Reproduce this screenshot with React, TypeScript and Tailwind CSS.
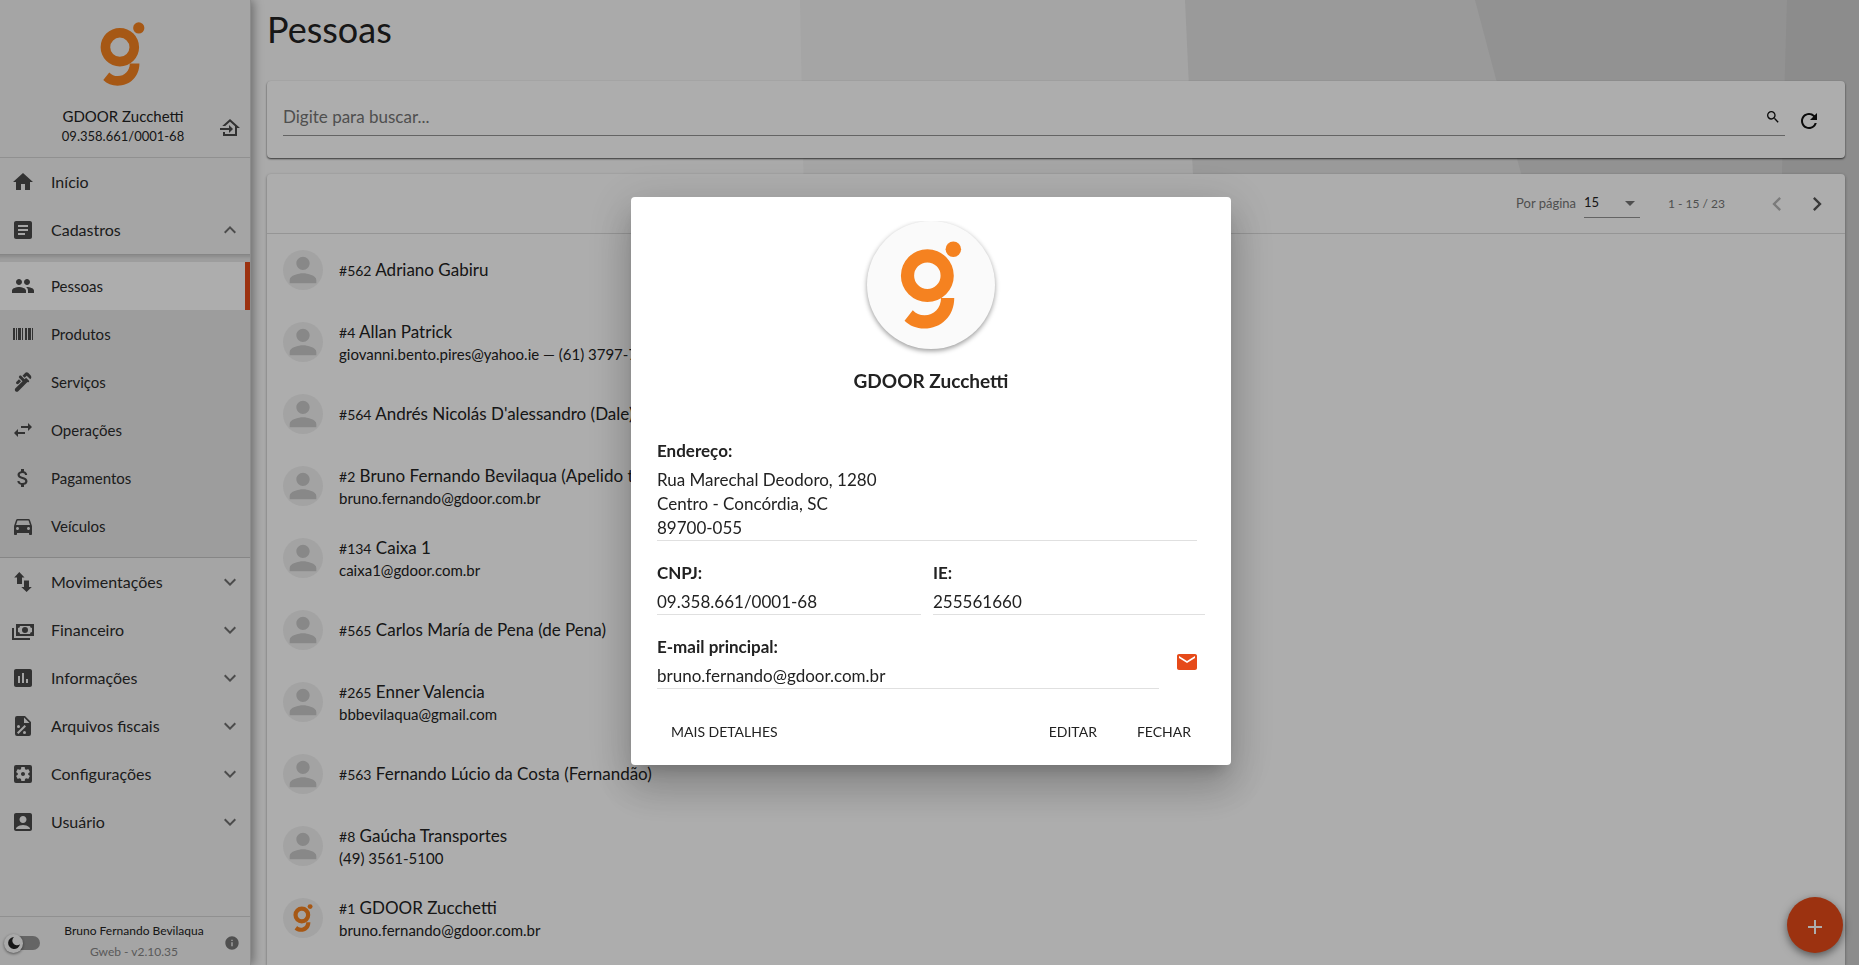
import type { ReactNode } from 'react';
import {
  MdAccountBox,
  MdArrowDropDown,
  MdArticle,
  MdAssessment,
  MdAttachMoney,
  MdChevronLeft,
  MdChevronRight,
  MdDirectionsCar,
  MdEmail,
  MdExpandLess,
  MdExpandMore,
  MdHome,
  MdInfo,
  MdPeople,
  MdPerson,
  MdPlumbing,
  MdRefresh,
  MdSearch,
  MdSettingsApplications,
  MdSwapHoriz,
} from 'react-icons/md';

function PathIcon({ d, className = 'w-6 h-6' }: { d: string; className?: string }) {
  return (
    <svg viewBox="0 0 24 24" className={className} fill="currentColor" fillRule="evenodd" aria-hidden="true">
      <path d={d} />
    </svg>
  );
}

const BARCODE =
  'M2,6H4V18H2V6M5,6H6V18H5V6M7,6H10V18H7V6M11,6H12V18H11V6M14,6H16V18H14V6M17,6H20V18H17V6M21,6H22V18H21V6Z';
const SWAP_VERTICAL = 'M8.3 2L13.5 7.5H11V14H6V7.5H3.2ZM13 10.5H18V17H20.8L15.6 22L10.3 17H13Z';
const CASH =
  'M5,6H23V18H5V6M14,9A3,3 0 0,1 17,12A3,3 0 0,1 14,15A3,3 0 0,1 11,12A3,3 0 0,1 14,9M9,8A2,2 0 0,1 7,10V14A2,2 0 0,1 9,16H19A2,2 0 0,1 21,14V10A2,2 0 0,1 19,8H9M1,10H3V20H19V22H1V10Z';
const FILE_PERCENT =
  'M6 2H14L20 8V20A2 2 0 0 1 18 22H6A2 2 0 0 1 4 20V4A2 2 0 0 1 6 2M13 3.5V9H18.5ZM7.5 11A1.5 1.5 0 1 0 7.5 14A1.5 1.5 0 1 0 7.5 11M13.5 17A1.5 1.5 0 1 0 13.5 20A1.5 1.5 0 1 0 13.5 17M13.6 11L6 18.6L7.4 20L15 12.4Z';
const HOME_IMPORT =
  'M15 13L11 9V12H2V14H11V17M5 20V16H7V18H17V10.19L12 5.69L7.21 10H4.22L12 3L22 12H19V20H5Z';

function Logo({ className }: { className: string }) {
  return (
    <svg viewBox="302 66 134 193" className={className} fill="#f58220" aria-label="GDOOR">
      <path
        fillRule="evenodd"
        d="M361 84A58 58 0 1 1 361 200A58 58 0 1 1 361 84ZM361 113A29 29 0 1 0 361 171A29 29 0 1 0 361 113Z"
      />
      <circle cx="418" cy="84" r="17" />
      <path d="M391 191H420C420 231 391 258 354 258C337 258 322 252 311 241L329 218C336 225 344 229 355 229C375 229 391 213 391 191Z" />
    </svg>
  );
}

interface NavEntry {
  label: string;
  icon: ReactNode;
}

const registerItems: NavEntry[] = [
  { label: 'Pessoas', icon: <MdPeople className="w-6 h-6" /> },
  { label: 'Produtos', icon: <PathIcon d={BARCODE} /> },
  { label: 'Serviços', icon: <MdPlumbing className="w-6 h-6" /> },
  { label: 'Operações', icon: <MdSwapHoriz className="w-6 h-6" /> },
  { label: 'Pagamentos', icon: <MdAttachMoney className="w-6 h-6" /> },
  { label: 'Veículos', icon: <MdDirectionsCar className="w-6 h-6" /> },
];

const groups: NavEntry[] = [
  { label: 'Movimentações', icon: <PathIcon d={SWAP_VERTICAL} /> },
  { label: 'Financeiro', icon: <PathIcon d={CASH} /> },
  { label: 'Informações', icon: <MdAssessment className="w-6 h-6" /> },
  { label: 'Arquivos fiscais', icon: <PathIcon d={FILE_PERCENT} /> },
  { label: 'Configurações', icon: <MdSettingsApplications className="w-6 h-6" /> },
  { label: 'Usuário', icon: <MdAccountBox className="w-6 h-6" /> },
];

const people = [
  { id: 562, name: 'Adriano Gabiru' },
  { id: 4, name: 'Allan Patrick', detail: 'giovanni.bento.pires@yahoo.ie — (61) 3797-7150' },
  { id: 564, name: "Andrés Nicolás D'alessandro (Dale)" },
  { id: 2, name: 'Bruno Fernando Bevilaqua (Apelido teste)', detail: 'bruno.fernando@gdoor.com.br' },
  { id: 134, name: 'Caixa 1', detail: 'caixa1@gdoor.com.br' },
  { id: 565, name: 'Carlos María de Pena (de Pena)' },
  { id: 265, name: 'Enner Valencia', detail: 'bbbevilaqua@gmail.com' },
  { id: 563, name: 'Fernando Lúcio da Costa (Fernandão)' },
  { id: 8, name: 'Gaúcha Transportes', detail: '(49) 3561-5100' },
  { id: 1, name: 'GDOOR Zucchetti', detail: 'bruno.fernando@gdoor.com.br', logo: true },
];

function Sidebar() {
  return (
    <aside className="relative z-10 flex w-[251px] shrink-0 flex-col border-r border-[#d0d0d0] bg-[#f4f4f4] text-[#4b4b4b] shadow-[2px_0_10px_rgba(0,0,0,0.4)]">
      <header className="flex h-[158px] shrink-0 flex-col items-center border-b border-[#d4d4d4] pt-[22px]">
        <Logo className="mr-1.5 h-16 w-[45px]" />
        <div className="mt-5 grid w-full grid-cols-[40px_1fr_40px] items-center">
          <div className="col-start-2 pr-1 text-center text-[#222]">
            <p className="text-[15px] leading-5">GDOOR Zucchetti</p>
            <p className="text-[13px] leading-5">09.358.661/0001-68</p>
          </div>
          <button aria-label="Trocar empresa" className="justify-self-center pt-1">
            <PathIcon d={HOME_IMPORT} />
          </button>
        </div>
      </header>

      <nav className="flex-1 text-[16px]">
        <a href="#inicio" className="flex h-12 items-center gap-4 pl-[11px]">
          <MdHome className="w-6 h-6" />
          <span className="text-[#2b2b2b]">Início</span>
        </a>
        <button className="flex h-12 w-full items-center gap-4 pr-2 pl-[11px]">
          <MdArticle className="w-6 h-6" />
          <span className="text-[#2b2b2b]">Cadastros</span>
          <MdExpandLess className="ml-auto w-6 h-6 text-[#707070]" />
        </button>
        <ul className="border-y border-[#c6c6c6] bg-[#e8e8e8] py-[7px] text-[15px] shadow-[inset_0_4px_3px_-2px_rgba(0,0,0,0.12)]">
          {registerItems.map((item, i) => (
            <li key={item.label}>
              <a
                href={`#${item.label}`}
                className={
                  i === 0
                    ? 'flex h-12 items-center gap-4 border-r-[5px] border-[#e64a19] bg-white pl-[11px]'
                    : 'flex h-12 items-center gap-4 pl-[11px]'
                }
              >
                {item.icon}
                <span className="text-[#2b2b2b]">{item.label}</span>
              </a>
            </li>
          ))}
        </ul>
        {groups.map((group) => (
          <button key={group.label} className="flex h-12 w-full items-center gap-4 pr-2 pl-[11px]">
            {group.icon}
            <span className="text-[#2b2b2b]">{group.label}</span>
            <MdExpandMore className="ml-auto w-6 h-6 text-[#707070]" />
          </button>
        ))}
      </nav>

      <footer className="flex h-[49px] shrink-0 items-center justify-between border-t border-[#d4d4d4] pt-1 pr-[10px] pl-1">
        <label className="relative flex h-5 w-9 items-center">
          <input type="checkbox" aria-label="Tema escuro" className="peer sr-only" />
          <span className="ml-2 h-[14px] w-7 rounded-full bg-[#969696]" />
          <span className="absolute left-0 flex h-[19px] w-[19px] items-center justify-center rounded-full bg-[#fafafa] shadow-[0_1px_3px_rgba(0,0,0,0.5)]">
            <svg viewBox="0 0 14 14" className="h-[14px] w-[14px]" fill="#222" aria-hidden="true">
              <path d="M7 1A6 6 0 1 0 13 8.2A4.4 4.4 0 0 1 7 1Z" />
            </svg>
          </span>
        </label>
        <div className="pb-1 pl-1 text-center">
          <p className="text-[12px] leading-[21px] text-[#222]">Bruno Fernando Bevilaqua</p>
          <p className="text-[12px] leading-[21px] text-[#858585]">Gweb - v2.10.35</p>
        </div>
        <button aria-label="Informações do sistema" className="text-[#777]">
          <MdInfo className="h-4 w-4" />
        </button>
      </footer>
    </aside>
  );
}

function Backdrop() {
  return (
    <svg
      viewBox="0 0 1608 965"
      preserveAspectRatio="none"
      className="absolute inset-0 h-full w-full"
      aria-hidden="true"
    >
      <rect width="1608" height="965" fill="#fbfbfb" />
      <path d="M549 0H1608V965H568Z" fill="#f3f3f3" />
      <path d="M934 0H1608V965H978Z" fill="#e3e3e3" />
      <path d="M1224 0H1608V965H1480Z" fill="#d7d7d7" />
      <path d="M1536 0H1608V965H1508Z" fill="#cecece" />
    </svg>
  );
}

function SearchCard() {
  return (
    <section className="mt-7 flex h-[77px] shrink-0 items-center gap-2 rounded bg-white pr-5 pl-4 shadow-[0_1px_2px_rgba(0,0,0,0.7)]">
      <label className="mb-1 flex h-9 flex-1 items-center border-b border-[#949494] pr-1">
        <input
          type="text"
          aria-label="Buscar"
          placeholder="Digite para buscar..."
          className="flex-1 bg-transparent text-[17px] text-black outline-none placeholder:text-[#757575]"
        />
        <MdSearch className="h-4 w-4 text-[#111]" />
      </label>
      <button aria-label="Atualizar" className="flex h-8 w-8 items-center justify-center pt-0.5">
        <MdRefresh className="h-6 w-6 text-[#111]" />
      </button>
    </section>
  );
}

function PeopleList() {
  return (
    <section className="mt-4 flex-1 rounded-t bg-white shadow-[0_1px_3px_rgba(0,0,0,0.4)]">
      <div className="flex h-[60px] items-center justify-end border-b border-[#dcdcdc] pr-2 text-[13px] text-[#757575]">
        <label htmlFor="page-size">Por página</label>
        <div className="relative ml-2 flex h-7 w-14 items-center border-b border-[#949494]">
          <select id="page-size" defaultValue="15" className="w-full appearance-none bg-transparent text-[#222] outline-none">
            <option>15</option>
            <option>30</option>
          </select>
          <MdArrowDropDown className="pointer-events-none absolute -right-0.5 h-6 w-6" />
        </div>
        <span className="mr-8 ml-7 text-[12px]">1 - 15 / 23</span>
        <button aria-label="Página anterior" className="flex h-10 w-10 items-center justify-center text-[#b5b5b5]">
          <MdChevronLeft className="h-7 w-7" />
        </button>
        <button aria-label="Próxima página" className="flex h-10 w-10 items-center justify-center text-[#555]">
          <MdChevronRight className="h-7 w-7" />
        </button>
      </div>
      <ul>
        {people.map((person) => (
          <li key={person.id} className="flex h-[72px] items-center gap-4 px-4">
            <span className="flex h-10 w-10 items-center justify-center rounded-full bg-[#f1f1f1] text-[#c9c9c9]">
              {person.logo ? <Logo className="h-7 w-5" /> : <MdPerson className="h-10 w-10" />}
            </span>
            <div className="text-[#222]">
              <p className="text-[17px] leading-6">
                <small className="text-[14px] leading-none">#{person.id}</small> {person.name}
              </p>
              {person.detail && <p className="text-[15px] leading-5">{person.detail}</p>}
            </div>
          </li>
        ))}
      </ul>
    </section>
  );
}

function Field({ label, children }: { label: string; children: ReactNode }) {
  return (
    <div className="border-b border-[#e0e0e0] text-[17px] leading-6">
      <dt className="mb-[5px] font-bold">{label}</dt>
      <dd>{children}</dd>
    </div>
  );
}

function PersonDialog() {
  return (
    <div className="fixed inset-0 z-30 flex items-center justify-center bg-black/32 pb-[3px] pl-[3px]">
      <div
        role="dialog"
        aria-modal="true"
        aria-labelledby="person-name"
        className="w-[600px] rounded bg-white px-[26px] pt-6 pb-4 text-[#222] shadow-[0_11px_15px_-7px_rgba(0,0,0,0.2),0_24px_38px_3px_rgba(0,0,0,0.14),0_9px_46px_8px_rgba(0,0,0,0.12)]"
      >
        <div className="flex flex-col items-center overflow-hidden">
          <div className="flex h-32 w-32 items-center justify-center rounded-full bg-[#fafafa] shadow-[0_2px_5px_rgba(0,0,0,0.4)]">
            <Logo className="h-[88px] w-[62px]" />
          </div>
          <h2 id="person-name" className="mt-[18px] text-[19px] leading-7 font-bold">
            GDOOR Zucchetti
          </h2>
        </div>

        <dl className="mt-11">
          <div className="mr-2">
            <Field label="Endereço:">
              Rua Marechal Deodoro, 1280
              <br />
              Centro - Concórdia, SC
              <br />
              89700-055
            </Field>
          </div>
          <div className="mt-5 grid grid-cols-[264px_1fr] gap-3">
            <Field label="CNPJ:">09.358.661/0001-68</Field>
            <Field label="IE:">255561660</Field>
          </div>
          <div className="mt-5 flex items-center gap-4">
            <div className="flex-1">
              <Field label="E-mail principal:">bruno.fernando@gdoor.com.br</Field>
            </div>
            <a href="mailto:bruno.fernando@gdoor.com.br" aria-label="Enviar e-mail" className="mr-1.5 text-[#e64a19]">
              <MdEmail className="h-6 w-6" />
            </a>
          </div>
        </dl>

        <div className="mt-6 flex text-[14px]">
          <button className="h-9 px-[14px]">MAIS DETALHES</button>
          <button className="ml-auto h-9 px-[14px]">EDITAR</button>
          <button className="ml-3 h-9 px-[14px]">FECHAR</button>
        </div>
      </div>
    </div>
  );
}

function App() {
  return (
    <div className="flex h-screen overflow-hidden bg-white font-['Lato',sans-serif]">
      <Sidebar />
      <main className="relative flex-1">
        <Backdrop />
        <div className="relative flex h-full flex-col pr-[14px] pl-4">
          <h1 className="pt-[5px] text-[36px] leading-12 text-[#222]">Pessoas</h1>
          <SearchCard />
          <PeopleList />
        </div>
        <button
          aria-label="Adicionar pessoa"
          className="fixed right-4 bottom-3 flex h-14 w-14 items-center justify-center rounded-full bg-[#e64a19] pt-1 text-white shadow-[0_3px_8px_rgba(0,0,0,0.5)]"
        >
          <PathIcon d="M11 5H13V11H19V13H13V19H11V13H5V11H11Z" />
        </button>
      </main>
      <PersonDialog />
    </div>
  );
}

export default App;
